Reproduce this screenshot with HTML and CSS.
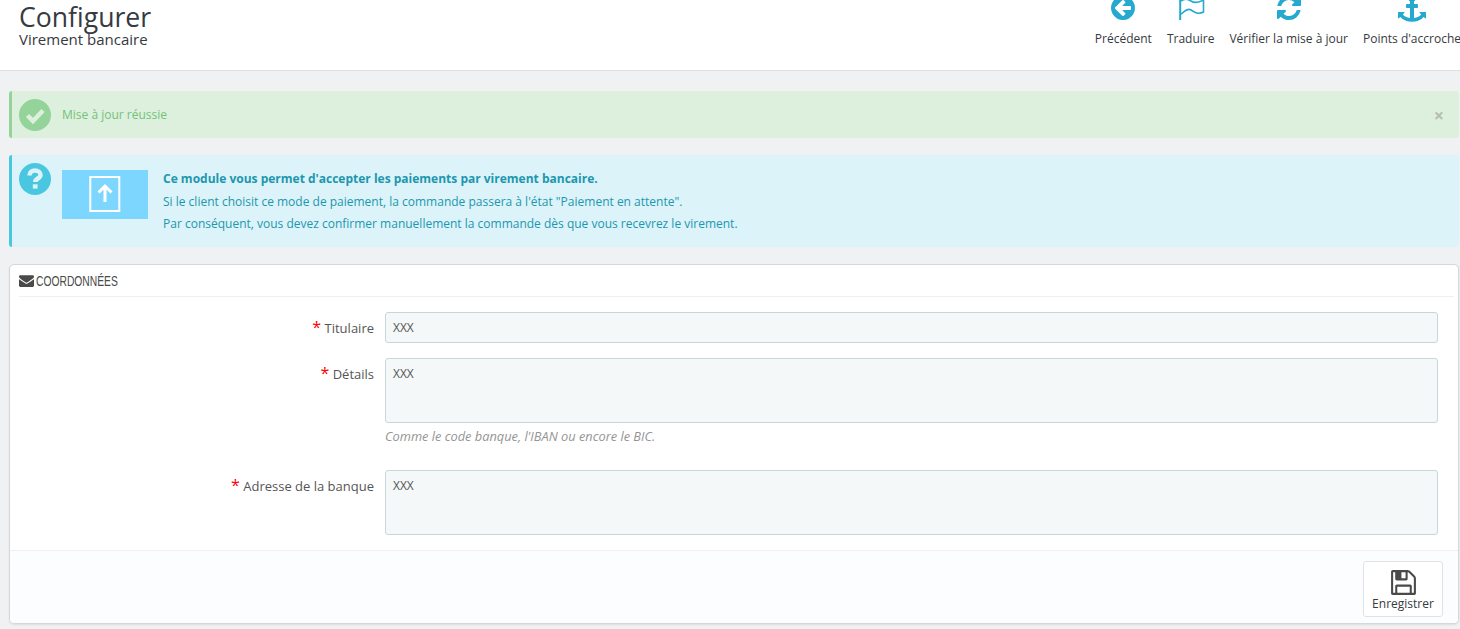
FILE: index.html
```html
<!DOCTYPE html>
<html lang="fr">
<head>
<meta charset="utf-8">
<title>Configurer</title>
<link rel="stylesheet" href="styles.css">
</head>
<body>
<header class="page-head">
  <div class="titles">
    <h1>Configurer</h1>
    <h2>Virement bancaire</h2>
  </div>
  <nav class="toolbar">
    <a class="tool tool-back">
      <svg class="tool-icon" viewBox="0 0 1792 1792"><path transform="translate(128 0)" d="M1280 960v-128q0-26-19-45t-45-19h-502l189-189q19-19 19-45t-19-45l-91-91q-18-18-45-18t-45 18l-362 362-91 91q-18 18-18 45t18 45l91 91 362 362q18 18 45 18t45-18l91-91q18-18 18-45t-18-45l-189-189h502q26 0 45-19t19-45zm256-64q0 209-103 385.500t-279.500 279.500-385.500 103-385.500-103-279.500-279.500-103-385.500 103-385.500 279.500-279.500 385.500-103 385.500 103 279.500 279.500 103 385.500z"/></svg>
      <span>Précédent</span>
    </a>
    <a class="tool tool-flag">
      <svg class="tool-icon" viewBox="0 0 28 28"><path class="flag-pole" d="M3.200 0V26"/><path class="flag-stroke" d="M4 7C8 4 11 5 14 7S21 9 26.500 6V18C21 21 17 18 14 16S8 17 4 20"/></svg>
      <span>Traduire</span>
    </a>
    <a class="tool tool-refresh">
      <svg class="tool-icon" viewBox="0 0 1792 1792"><path d="M1639 1056q0 5-1 7-64 268-268 434.500t-478 166.500q-146 0-282.500-55t-243.500-157l-129 129q-19 19-45 19t-45-19-19-45v-448q0-26 19-45t45-19h448q26 0 45 19t19 45-19 45l-137 137q71 66 161 102t187 36q134 0 250-65t186-179q11-17 53-117 8-23 30-23h192q13 0 22.500 9.500t9.500 22.500zm25-800v448q0 26-19 45t-45 19h-448q-26 0-45-19t-19-45 19-45l138-138q-148-137-349-137-134 0-250 65t-186 179q-11 17-53 117-8 23-30 23h-199q-13 0-22.500-9.500t-9.500-22.500v-7q65-268 270-434.500t480-166.500q146 0 284 55.500t245 156.500l130-129q19-19 45-19t45 19 19 45z"/></svg>
      <span>Vérifier la mise à jour</span>
    </a>
    <a class="tool tool-anchor">
      <svg class="tool-icon" viewBox="0 0 1792 1792"><path d="M960 256q0-26-19-45t-45-19-45 19-19 45 19 45 45 19 45-19 19-45zm832 928v352q0 22-20 30-8 2-12 2-12 0-23-9l-93-93q-119 143-318.500 226.500t-429.500 83.500-429.500-83.500-318.500-226.500l-93 93q-9 9-23 9-4 0-12-2-20-8-20-30v-352q0-14 9-23t23-9h352q22 0 30 20 8 19-7 35l-100 100q67 91 189.500 153.500t271.500 82.500v-647h-192q-26 0-45-19t-19-45v-128q0-26 19-45t45-19h192v-163q-58-34-93-92.500t-35-128.500q0-106 75-181t181-75 181 75 75 181q0 70-35 128.500t-93 92.500v163h192q26 0 45 19t19 45v128q0 26-19 45t-45 19h-192v647q149-20 271.500-82.500t189.500-153.500l-100-100q-15-16-7-35 8-20 30-20h352q14 0 23 9t9 23z"/></svg>
      <span>Points d'accroche</span>
    </a>
  </nav>
</header>

<main class="content">
  <section class="alert alert-success">
    <svg class="alert-icon" viewBox="0 0 32 32"><circle cx="16" cy="16" r="16" class="ok-disc"/><path class="ok-check" d="M8.500 16.500L14 22L24 11.500"/></svg>
    <p class="alert-msg">Mise à jour réussie</p>
    <span class="alert-close">×</span>
  </section>

  <section class="alert alert-info">
    <svg class="alert-icon" viewBox="0 0 32 32"><circle cx="16" cy="16" r="16" class="info-disc"/><path class="info-q" d="M10.500 12.500C10.500 9 13 7.500 16 7.500S21.500 9.300 21.500 12C21.500 15.500 16.200 15.500 16.200 19"/><rect class="info-dot" x="13.800" y="21.300" width="4.800" height="4.300"/></svg>
    <svg class="info-logo" viewBox="0 0 86 49"><rect width="86" height="49" class="logo-bg"/><rect x="28.300" y="7" width="29" height="34" class="logo-frame"/><path class="logo-arrow" d="M43 32V17M36.500 22.500L43 16L49.500 22.500"/></svg>
    <div class="info-text">
      <p class="info-lead">Ce module vous permet d'accepter les paiements par virement bancaire.</p>
      <p>Si le client choisit ce mode de paiement, la commande passera à l'état "Paiement en attente".</p>
      <p>Par conséquent, vous devez confirmer manuellement la commande dès que vous recevrez le virement.</p>
    </div>
  </section>

  <section class="panel">
    <div class="panel-head">
      <svg class="panel-icon" viewBox="0 0 1792 1792"><path d="M1792 710v794q0 66-47 113t-113 47h-1472q-66 0-113-47t-47-113v-794q44 49 101 87 362 246 497 345 57 42 92.500 65.500t94.500 48 110 24.500h2q51 0 110-24.500t94.500-48 92.500-65.500q170-123 498-345 57-39 100-87zm0-294q0 79-49 151t-122 123q-376 261-468 325-10 7-42.500 30.500t-54 38-52 32.500-57.500 27-50 9h-2q-23 0-50-9t-57.500-27-52-32.500-54-38-42.500-30.500q-91-64-262-182.500t-205-142.500q-62-42-117-115.500t-55-136.500q0-78 41.500-130t118.500-52h1472q65 0 112.500 47t47.500 113z"/></svg>
      <span class="panel-title">COORDONNÉES</span>
    </div>
    <form class="panel-form">
      <div class="row">
        <label class="row-label"><span class="req">*</span> Titulaire</label>
        <div class="row-field"><input class="field" type="text" value="XXX"></div>
      </div>
      <div class="row row-help">
        <label class="row-label"><span class="req">*</span> Détails</label>
        <div class="row-field">
          <textarea class="field field-area">XXX</textarea>
          <p class="help">Comme le code banque, l'IBAN ou encore le BIC.</p>
        </div>
      </div>
      <div class="row">
        <label class="row-label"><span class="req">*</span> Adresse de la banque</label>
        <div class="row-field"><textarea class="field field-area">XXX</textarea></div>
      </div>
    </form>
    <footer class="panel-foot">
      <button class="save" type="button">
        <svg class="save-icon" viewBox="0 0 1792 1792"><path d="M512 1536h768v-384h-768v384zm896 0h128v-896q0-14-10-38.500t-20-34.500l-281-281q-10-10-34-20t-39-10v416q0 40-28 68t-68 28h-576q-40 0-68-28t-28-68v-416h-128v1280h128v-416q0-40 28-68t68-28h832q40 0 68 28t28 68v416zm-384-928v-320q0-13-9.500-22.500t-22.500-9.500h-192q-13 0-22.500 9.500t-9.500 22.500v320q0 13 9.500 22.500t22.500 9.500h192q13 0 22.500-9.500t9.500-22.500zm640 32v928q0 40-28 68t-68 28h-1344q-40 0-68-28t-28-68v-1344q0-40 28-68t68-28h928q40 0 88 20t76 48l280 280q28 28 48 76t20 88z"/></svg>
        <span>Enregistrer</span>
      </button>
    </footer>
  </section>
</main>
</body>
</html>
```

FILE: styles.css
```css
* { box-sizing: border-box; }
html, body { margin: 0; height: 629px; overflow: hidden; }
body {
  background: #eff1f2;
  color: #555;
  font-family: "Open Sans", "Liberation Sans", sans-serif;
  font-size: 12px;
}
p { margin: 0; }

.page-head {
  height: 71px;
  background: #fff;
  border-bottom: 1px solid #dcdfe3;
  display: flex;
  justify-content: space-between;
  overflow: hidden;
}
.titles { padding: 4px 0 0 19px; }
h1 {
  margin: 0;
  font-size: 26.600px;
  font-weight: 400;
  line-height: 26px;
  color: #363a41;
}
h2 {
  margin: 0;
  font-size: 15px;
  font-weight: 400;
  line-height: 19px;
  color: #363a41;
}
.toolbar {
  display: flex;
  gap: 15px;
  margin-top: -6px;
  margin-right: -1px;
  align-items: flex-start;
}
.tool {
  display: flex;
  flex-direction: column;
  align-items: center;
  color: #363a41;
  font-size: 12px;
  line-height: 16px;
  white-space: nowrap;
}
.tool span { margin-top: 9px; }
.tool-icon { width: 28px; height: 28px; fill: #25a9cf; display: block; }
.flag-stroke { fill: none; stroke: #25a9cf; stroke-width: 1.600; }
.flag-pole { fill: none; stroke: #25a9cf; stroke-width: 2; }

.content { padding: 20px 1px 0 9px; }

.alert { display: flex; border-left: 3px solid; border-radius: 3px; }
.alert-icon { width: 32px; height: 32px; flex: none; display: block; margin-left: 7px; }
.alert-success {
  height: 47px;
  background: #ddf0dd;
  border-color: #95d39b;
  color: #72c279;
  align-items: center;
  padding-right: 15px;
}
.alert-msg { flex: 1; margin-left: 11px; }
.alert-close { color: #b3bfb0; font-size: 18px; font-weight: 700; line-height: 1; }
.ok-disc { fill: #94d39a; }
.ok-check { fill: none; stroke: #ddf0dd; stroke-width: 4.500; }

.alert-info {
  height: 92px;
  margin-top: 17px;
  background: #dbf3f9;
  border-color: #4ac7e0;
  color: #1d97ae;
  padding-top: 8px;
  align-items: flex-start;
}
.info-disc { fill: #4ac7e0; }
.info-q { fill: none; stroke: #dbf3f9; stroke-width: 4.500; }
.info-dot { fill: #dbf3f9; }
.info-logo { width: 86px; height: 49px; flex: none; margin: 7px 0 0 11px; display: block; }
.logo-bg { fill: #7dd6fd; }
.logo-frame { fill: none; stroke: #fff; stroke-width: 2; }
.logo-arrow { fill: none; stroke: #fff; stroke-width: 3; }
.info-text { margin-left: 15px; line-height: 22.500px; padding-top: 5px; font-size: 12px; }
.info-lead { font-weight: 700; }

.panel {
  margin-top: 17px;
  height: 360px;
  background: #fff;
  border: 1px solid #d3d8db;
  border-radius: 5px;
  box-shadow: 0 1px 2px rgba(0, 0, 0, .08);
  display: flex;
  flex-direction: column;
  overflow: hidden;
}
.panel-head {
  height: 32px;
  margin: 0 4px 0 9px;
  border-bottom: 1px solid #eef0f1;
  display: flex;
  align-items: center;
  gap: 2px;
  color: #4a4a4a;
  font-family: "Liberation Sans", sans-serif;
  font-size: 14.500px;
}
.panel-title { display: inline-block; transform: scaleX(.71); transform-origin: left center; }
.panel-icon { width: 15px; height: 15px; fill: #4a4a4a; display: block; }

.panel-form { flex: 1; padding-top: 15px; }
.row { display: flex; margin-bottom: 15px; }
.row-help { margin-bottom: 26px; }
.row-label {
  width: 364px;
  flex: none;
  text-align: right;
  color: #555;
  font-size: 13px;
  line-height: 17px;
  padding-top: 8px;
}
.req { color: #f00; font-size: 16px; line-height: 12px; }
.row-field { width: 1053px; margin-left: 11px; }
.field {
  display: block;
  width: 100%;
  height: 31px;
  background: #f5f8f9;
  border: 1px solid #c7d6db;
  border-radius: 3px;
  padding: 6px 7px;
  color: #555;
  font-family: "Open Sans", "Liberation Sans", sans-serif;
  font-size: 12px;
  line-height: 17px;
  resize: none;
}
.field-area { height: 65px; }
.help {
  margin-top: 5px;
  font-style: italic;
  font-size: 12.800px;
  line-height: 16px;
  color: #959595;
}

.panel-foot {
  height: 73px;
  background: #fcfdfe;
  border-top: 1px solid #eef0f1;
  display: flex;
  justify-content: flex-end;
  padding: 10px 15px 0 0;
}
.save {
  width: 80px;
  height: 56px;
  background: #fff;
  border: 1px solid #dfe3e6;
  border-radius: 3px;
  padding: 6px 0 0;
  display: flex;
  flex-direction: column;
  align-items: center;
  color: #363a41;
  font-family: "Open Sans", "Liberation Sans", sans-serif;
  font-size: 12px;
  line-height: 16px;
}
.save-icon { width: 29px; height: 29px; fill: #4a4a4a; display: block; margin-bottom: -1px; }
```
